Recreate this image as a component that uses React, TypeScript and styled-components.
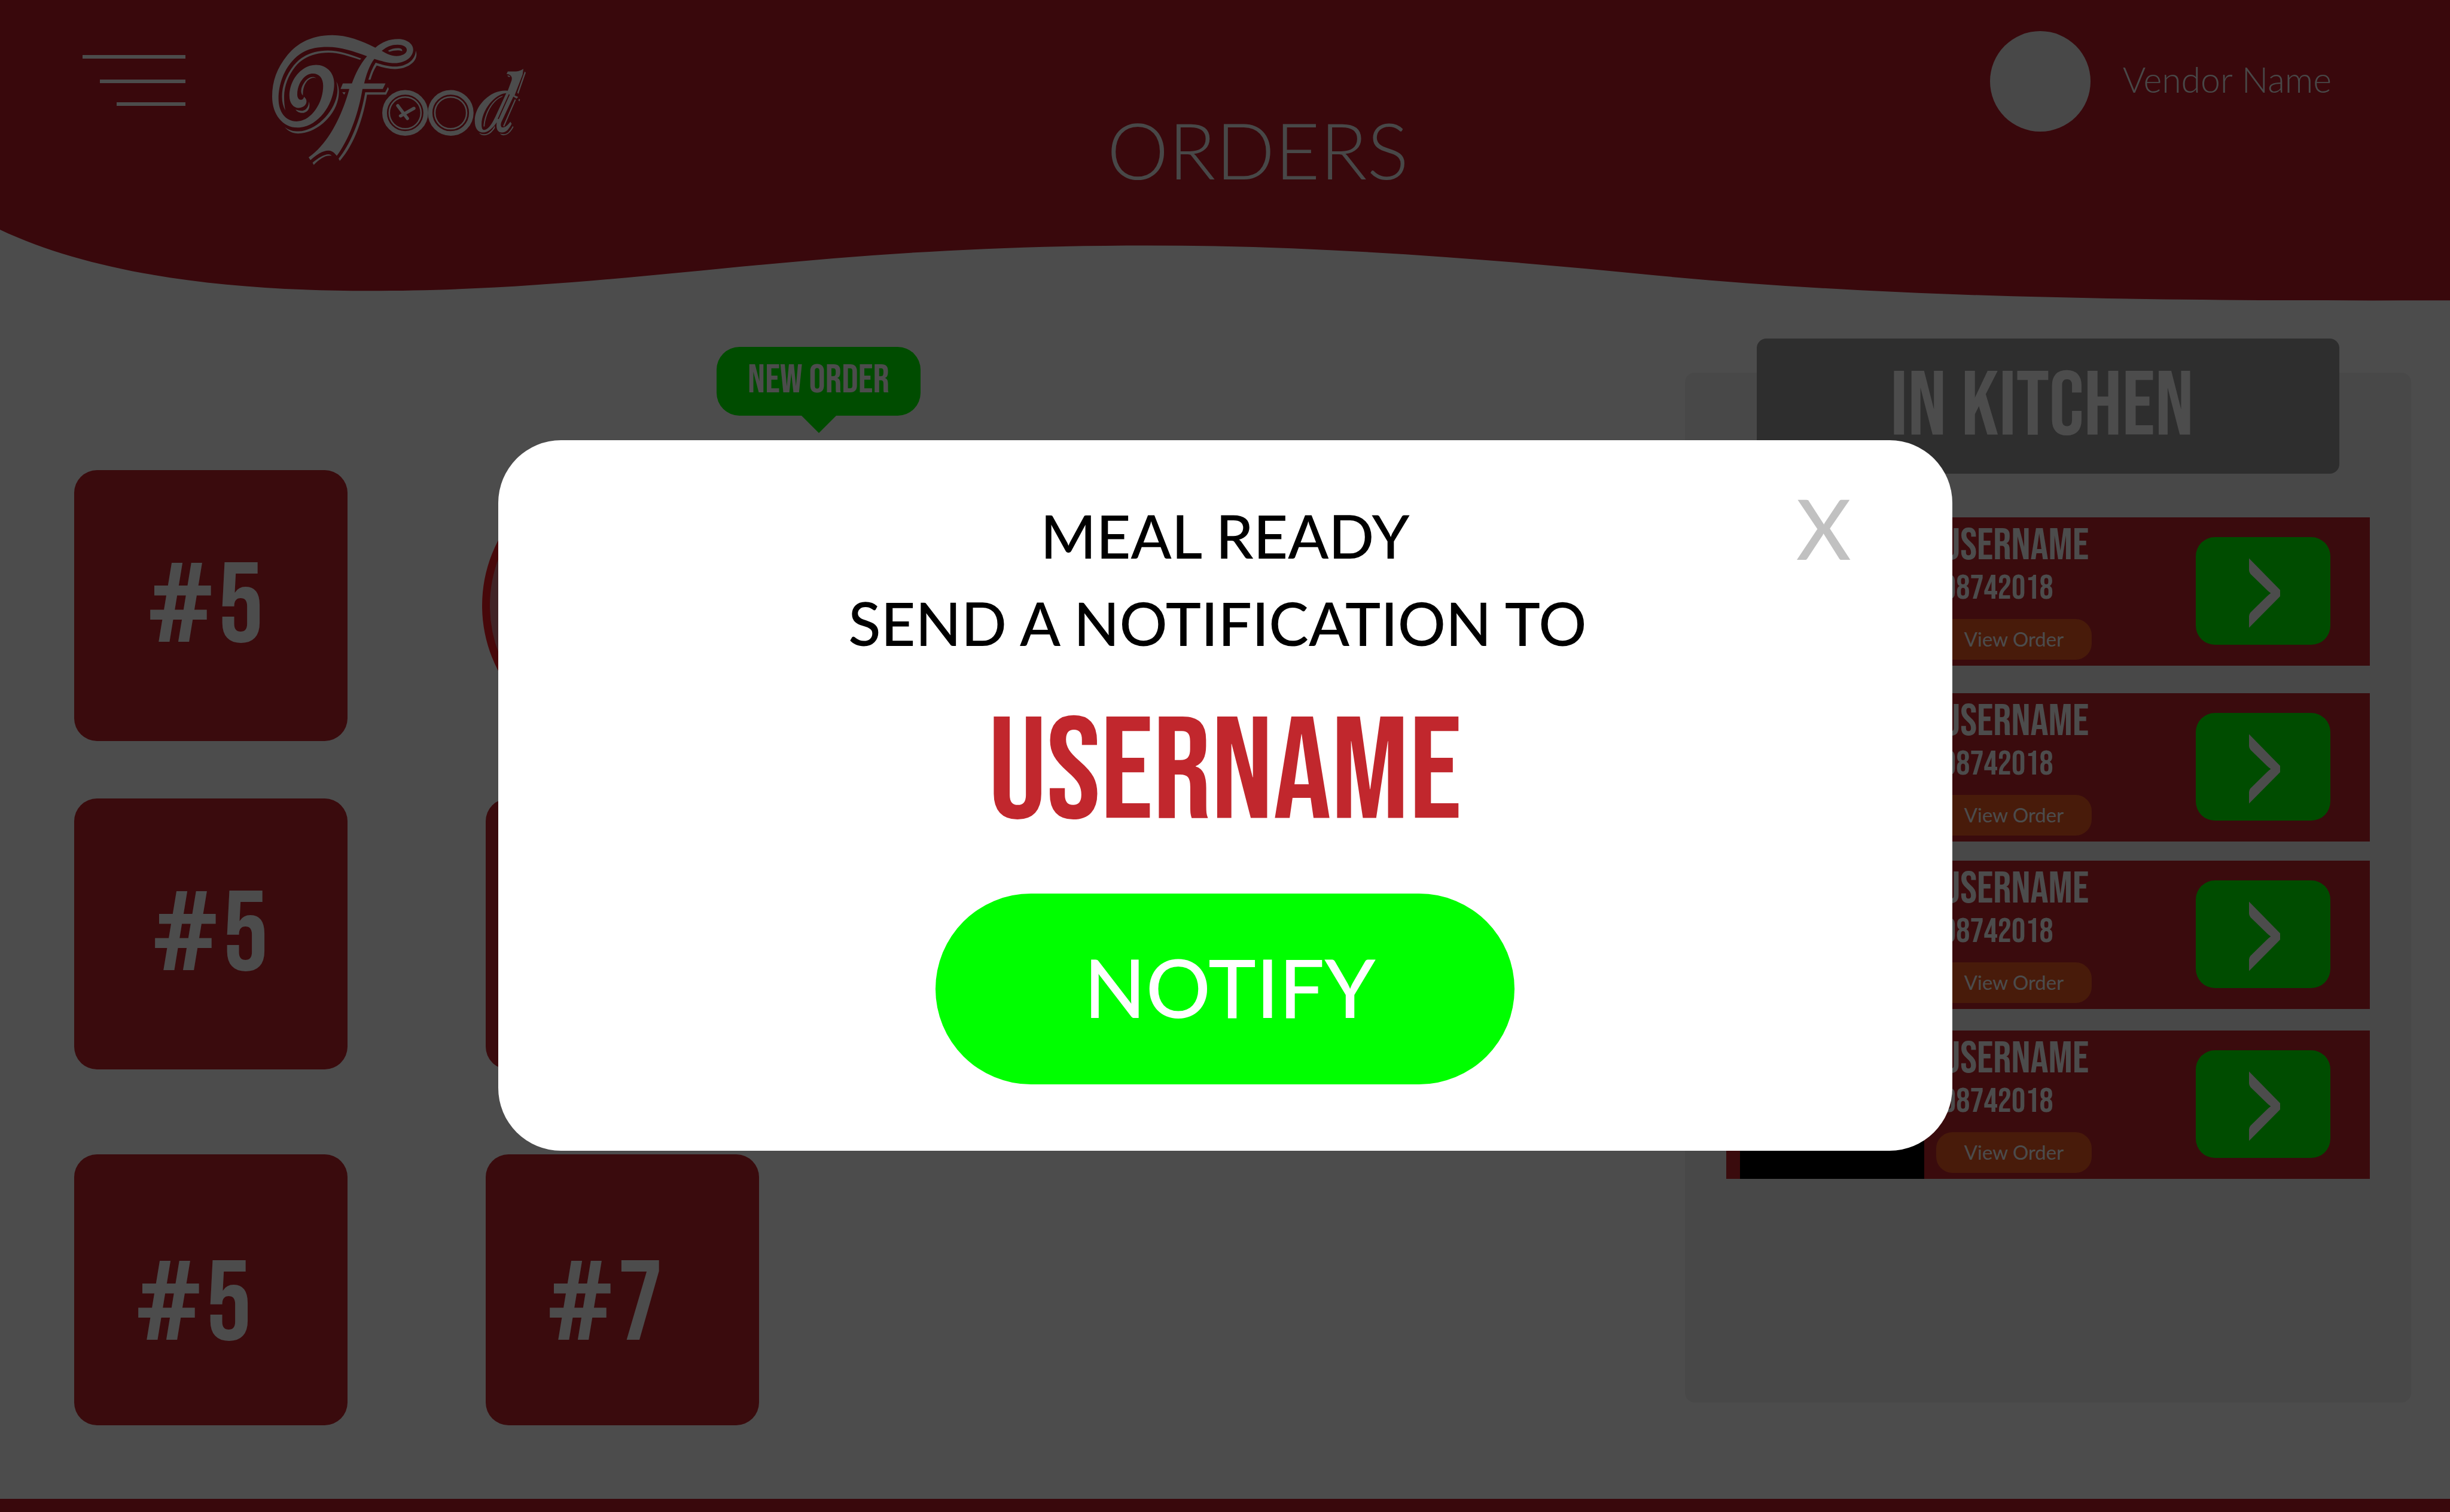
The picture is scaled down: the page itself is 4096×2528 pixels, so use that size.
import React from "react";
import styled, { createGlobalStyle } from "styled-components";

const color = {
  brand: "#be1b28",
  card: "#c1272d",
  green: "#00ff00",
  orange: "#f15a24",
  white: "#ffffff",
  soft: "#f2f2f2",
  gray: "#999999",
};

const display = `"Bebas Neue", "Roboto Condensed", sans-serif`;
const body = `Lato, "Open Sans", sans-serif`;

const GlobalStyle = createGlobalStyle`
  * { box-sizing: border-box; }
  body { margin: 0; background: ${color.white}; font-family: ${body}; }
  button { border: 0; padding: 0; background: none; font: inherit; cursor: pointer; }
  h1, h2, p, ul { margin: 0; padding: 0; font-weight: 400; }
  svg { display: block; }
`;

const Page = styled.div`
  display: flex;
  flex-direction: column;
  min-height: 100vh;
`;

/* ---------- header ---------- */

const Header = styled.header`
  position: relative;
  display: flex;
  justify-content: space-between;
  align-items: flex-start;
  height: 503px;
  padding: 52px 198px 0 138px;
`;

const Wave = styled.svg`
  position: absolute;
  inset: 0;
  z-index: -1;
  width: 100%;
  height: 100%;
`;

const Brand = styled.div`
  display: flex;
  align-items: flex-start;
  gap: 145px;
`;

const MenuButton = styled.button`
  margin-top: 40px;
`;

const LogoLink = styled.a`
  margin-top: 6px;
`;

const PageTitle = styled.h1`
  margin-top: 134px;
  color: ${color.soft};
  font-size: 130px;
  line-height: 128px;
  font-weight: 300;
`;

const Vendor = styled.div`
  display: flex;
  align-items: center;
  gap: 54px;
`;

const Avatar = styled.div`
  width: 168px;
  height: 168px;
  border-radius: 50%;
  background: ${color.soft};
`;

const VendorName = styled.p`
  padding-bottom: 6px;
  color: ${color.soft};
  font-size: 59px;
  line-height: 72px;
  font-weight: 300;
`;

/* ---------- order board ---------- */

const Main = styled.main`
  display: flex;
  flex: 1;
  justify-content: space-between;
  align-items: flex-start;
  padding: 0 65px 0 124px;
`;

const Board = styled.section`
  padding-top: 77px;
`;

const NewOrder = styled.p`
  position: relative;
  width: 341px;
  height: 115px;
  margin: 0 0 91px 1074px;
  border-radius: 38px;
  background: ${color.green};
  color: ${color.white};
  font-family: ${display};
  font-size: 68px;
  line-height: 111px;
  text-align: center;

  &::after {
    content: "";
    position: absolute;
    top: 100%;
    left: 50%;
    margin: -1px 0 0 -30px;
    border: 30px solid transparent;
    border-top-color: ${color.green};
    border-bottom: 0;
  }
`;

const Tiles = styled.div`
  display: grid;
  grid-template-columns: repeat(2, 457px);
  column-gap: 231px;
`;

const tilePadding = {
  top: "0 16px 0 0",
  middle: "0",
  bottom: "46px 56px 0 0",
};

const Tile = styled.button<{ $row: keyof typeof tilePadding }>`
  display: flex;
  justify-content: center;
  align-items: center;
  height: 453px;
  margin-top: ${(p) => (p.$row === "bottom" ? 46 : 0)}px;
  margin-bottom: ${(p) => (p.$row === "bottom" ? 0 : 96)}px;
  padding: ${(p) => tilePadding[p.$row]};
  border-radius: 38px;
  background: ${color.card};
  color: ${color.white};
  font-family: ${display};
  font-size: 190px;
  line-height: 200px;
`;

const TileLabel = styled.span`
  display: flex;
  align-items: baseline;
  gap: 8px;
`;

const Hash = styled.span`
  font-family: Roboto, ${body};
  font-size: 186px;
  font-weight: 900;
`;

const Pulse = styled.div`
  height: 469px;
  margin: -8px -6px;
  border: 13px solid #ed1c24;
  border-radius: 50%;
  background: #db7b83;
`;

/* ---------- kitchen panel ---------- */

const Kitchen = styled.aside`
  display: flex;
  flex-direction: column;
  align-items: center;
  width: 1214px;
  padding-top: 63px;
`;

const KitchenTitle = styled.h2`
  z-index: 1;
  width: 974px;
  padding: 4px 20px 0 0;
  border-radius: 16px;
  background: ${color.gray};
  color: ${color.white};
  font-family: ${display};
  font-size: 152px;
  line-height: 222px;
  text-align: center;
`;

const Queue = styled.ul`
  width: 100%;
  min-height: 1722px;
  && {
    margin-top: -169px;
    padding: 242px 69px 0;
  }
  border-radius: 16px;
  background: ${color.soft};
  list-style: none;
`;

const QueueRow = styled.li<{ $after: number }>`
  display: flex;
  height: 248px;
  margin-bottom: ${(p) => p.$after}px;
  padding: 0 66px 0 23px;
  background: ${color.card};
  color: ${color.white};
`;

const Photo = styled.div`
  width: 308px;
  background: #000000;
`;

const Customer = styled.div`
  display: flex;
  flex-direction: column;
  align-items: flex-start;
  flex: 1;
  padding: 10px 0 0 20px;
  font-family: ${display};
`;

const CustomerName = styled.p`
  && { padding-left: 10px; }
  font-size: 75px;
  line-height: 76px;
`;

const OrderNumber = styled.p`
  && { padding-left: 10px; }
  font-size: 58px;
  line-height: 66px;
`;

const ViewOrder = styled.button`
  width: 260px;
  height: 68px;
  margin-top: 18px;
  padding-bottom: 3px;
  border-radius: 27px;
  background: ${color.orange};
  color: ${color.white};
  font-family: ${body};
  font-size: 33px;
  line-height: 40px;
`;

const ReadyButton = styled.button`
  display: flex;
  justify-content: center;
  align-items: center;
  width: 225px;
  height: 180px;
  margin-top: 33px;
  padding: 6px 0 0 4px;
  border-radius: 32px;
  background: ${color.green};
`;

const Footer = styled.footer`
  height: 22px;
  background: ${color.brand};
`;

/* ---------- dialog ---------- */

const Overlay = styled.div`
  position: fixed;
  inset: 0;
  z-index: 2;
  display: flex;
  justify-content: center;
  align-items: center;
  padding-top: 132px;
  background: rgba(0, 0, 0, 0.7);
`;

const Dialog = styled.section`
  position: relative;
  display: flex;
  flex-direction: column;
  align-items: center;
  width: 2431px;
  max-width: 94%;
  padding: 86px 0 111px;
  border-radius: 105px;
  background: ${color.white};
`;

const Close = styled.button`
  position: absolute;
  top: 69px;
  right: 169px;
  color: #c1c1c1;
  font-size: 140px;
  font-weight: 500;
  line-height: 154px;
`;

const Message = styled.p`
  color: #000000;
  font-size: 100px;
  font-weight: 500;
  line-height: 146px;
  white-space: pre;
`;

const Recipient = styled.h2`
  && { margin-top: 63px; }
  color: ${color.card};
  font-family: ${display};
  font-size: 242px;
  line-height: 238px;
`;

const Notify = styled.button`
  width: 968px;
  height: 319px;
  margin-top: 79px;
  padding: 0 0 8px 16px;
  border-radius: 160px;
  background: ${color.green};
  color: ${color.white};
  font-size: 135px;
  font-weight: 500;
  line-height: 160px;
`;

/* ---------- drawings ---------- */

const MenuIcon = () => (
  <svg width="172" height="85" viewBox="0 0 172 85" fill={color.white} aria-hidden="true">
    <path d="M0 0H172V6H0ZM29 41H172V47H29ZM57 79H172V85H57Z" />
  </svg>
);

const Chevron = () => (
  <svg width="52" height="117" viewBox="0 0 90 201" fill={color.white} aria-hidden="true">
    <path d="M0 0L90 92V110L0 201V168Q0 162 4 157L52 110Q57 105 63 101Q57 97 52 92L4 45Q0 40 0 34Z" />
  </svg>
);

const Logo = () => (
  <svg width="424" height="218" viewBox="28 22 1676 860" fill={color.white} role="img" aria-label="Food">
    {/* large swash, stem and loop */}
    <path
      fillRule="evenodd"
      d="M710 107C620 60 520 24 425 24C300 24 200 70 130 155C60 240 28 330 28 430C28 550 100 635 195 635C330 635 438 480 438 345C438 270 385 221 318 221C220 221 142 320 142 425C142 475 170 505 203 505C232 505 255 485 255 462C255 448 247 438 238 431C237 442 230 451 218 451C203 451 194 436 194 415C194 345 240 278 297 278C340 278 365 310 365 358C365 480 280 594 190 594C115 594 70 530 70 445C70 350 105 250 175 180C235 122 300 102 395 102C480 102 570 132 655 163C610 215 580 275 555 343H495L480 380H538C500 520 430 680 330 780C310 800 290 817 269 831L281 850C320 815 360 787 400 787C425 787 440 803 455 822C545 700 600 530 625 380H759L777 343H636C650 285 670 225 703 181C745 193 790 209 840 209C905 209 960 170 960 120C960 80 915 50 860 50C800 50 755 70 710 107ZM752 128C785 100 815 87 857 87C890 87 918 100 918 122C918 147 885 162 850 162C815 162 785 148 752 128Z"
    />
    {/* engraved shadow lines */}
    <path d="M617 179C540 150 470 126 395 126C300 126 220 160 170 225C120 290 93 360 93 430C93 465 101 495 115 522C109 490 107 460 107 430C108 360 135 290 180 234C230 170 310 140 400 140C470 140 540 165 608 187Z" />
    <path d="M319 308C300 295 275 300 255 320C230 345 217 375 220 400C221 410 226 418 231 423C230 380 240 350 262 325C280 307 300 303 319 308Z" />
    <path d="M182 516C200 520 215 525 228 524C255 520 270 495 271 463C282 500 268 538 225 538C205 538 192 528 182 516Z" />
    <path d="M111 632C140 655 170 660 200 660C340 655 460 500 460 385C460 365 456 345 452 330C464 350 469 375 469 400C469 540 330 674 200 674C165 674 135 660 111 632Z" />
    <path d="M491 402H513L504 417Z" />
    <path d="M712 206C690 240 675 280 664 319H678C688 285 700 252 719 225C760 240 800 248 840 248C920 248 982 205 982 150C982 143 980 135 977 128C974 190 915 232 840 232C795 232 750 218 712 206Z" />
    <path d="M643 402H775L793 367L799 381L781 417H655C625 600 560 760 475 855L467 840C550 740 615 570 643 402Z" />
    <path d="M295 867C330 838 370 812 400 812C410 812 417 817 422 822C380 815 345 840 303 882Z" />
    <path d="M793 128C820 112 850 108 875 112C885 115 889 122 887 130C865 122 835 124 804 134Z" />
    {/* two plates and the cutlery */}
    <g fill="none" stroke={color.white}>
      <circle cx="907" cy="538" r="136" strokeWidth="31" />
      <circle cx="907" cy="538" r="105" strokeWidth="10" />
      <circle cx="1208" cy="538" r="136" strokeWidth="30" />
      <circle cx="1208" cy="538" r="105" strokeWidth="10" />
      <path d="M858 490L922 575M965 508L876 558" strokeWidth="21" strokeLinecap="round" />
    </g>
    {/* closing flourish */}
    <g transform="translate(840 0)">
      <path
        fillRule="evenodd"
        d="M745 264C800 266 825 264 848 246L843 285L790 422L814 432L803 444L782 430L702 600C696 618 700 634 710 634C728 634 745 620 762 596L771 610C752 646 735 667 707 667C678 667 666 645 672 600C645 640 615 667 582 667C548 667 527 640 527 590C527 510 590 435 660 405C690 392 720 388 745 392L770 325C778 300 765 283 737 281ZM735 408C660 412 572 520 572 615C572 640 578 651 590 651C620 648 645 600 662 566Z"
      />
      <path d="M714 424C650 440 590 530 585 628H592C598 550 640 460 706 432Z" />
      <path d="M755 416L682 578" stroke={color.brand} strokeWidth="7" />
      <path d="M795 450L718 627" stroke={color.white} strokeWidth="8" />
      <path d="M857 264L864 272L815 412L808 405Z" />
      <path d="M820 444L826 450L822 462L815 455Z" />
      <path d="M742 293C750 289 758 293 761 300L752 301Z" />
      <path d="M555 670C575 680 600 682 620 668C640 654 652 638 659 622L660 638C640 668 618 686 590 686C575 686 563 680 555 670Z" />
      <path d="M693 674C715 682 735 680 750 665C765 650 772 637 778 625L783 632C768 660 745 686 718 686C708 686 699 681 693 674Z" />
    </g>
  </svg>
);

/* ---------- data ---------- */

type TileData = { id: string; row: keyof typeof tilePadding; table?: number };

const tiles: TileData[] = [
  { id: "a", row: "top", table: 5 },
  { id: "b", row: "top" },
  { id: "c", row: "middle", table: 5 },
  { id: "d", row: "middle", table: 6 },
  { id: "e", row: "bottom", table: 5 },
  { id: "f", row: "bottom", table: 7 },
];

const queue = [
  { id: 1, after: 46 },
  { id: 2, after: 32 },
  { id: 3, after: 36 },
  { id: 4, after: 0 },
];

export default function App() {
  return (
    <Page>
      <GlobalStyle />
      <Header>
        <Wave viewBox="0 0 5400 663" preserveAspectRatio="none" aria-hidden="true">
          <path
            fill={color.brand}
            d="M0 0H5400V662C4700 664 4150 655 3650 607C3280 570 2900 541 2530 541C1750 541 1400 641 812 641C500 641 210 605 0 506Z"
          />
        </Wave>
        <Brand>
          <MenuButton aria-label="Menu">
            <MenuIcon />
          </MenuButton>
          <LogoLink href="#home">
            <Logo />
          </LogoLink>
        </Brand>
        <PageTitle>ORDERS</PageTitle>
        <Vendor>
          <Avatar />
          <VendorName>Vendor Name</VendorName>
        </Vendor>
      </Header>

      <Main>
        <Board>
          <NewOrder>NEW ORDER</NewOrder>
          <Tiles>
            {tiles.map((t) =>
              t.table ? (
                <Tile key={t.id} $row={t.row}>
                  <TileLabel>
                    <Hash>#</Hash>
                    {t.table}
                  </TileLabel>
                </Tile>
              ) : (
                <Pulse key={t.id} />
              )
            )}
          </Tiles>
        </Board>

        <Kitchen>
          <KitchenTitle>IN KITCHEN</KitchenTitle>
          <Queue>
            {queue.map((q) => (
              <QueueRow key={q.id} $after={q.after}>
                <Photo />
                <Customer>
                  <CustomerName>USERNAME</CustomerName>
                  <OrderNumber>98742018</OrderNumber>
                  <ViewOrder>View Order</ViewOrder>
                </Customer>
                <ReadyButton aria-label="Meal ready">
                  <Chevron />
                </ReadyButton>
              </QueueRow>
            ))}
          </Queue>
        </Kitchen>
      </Main>
      <Footer />

      <Overlay>
        <Dialog role="dialog" aria-modal="true" aria-label="Meal ready">
          <Close aria-label="Close">X</Close>
          <Message>MEAL READY</Message>
          <Message>{"SEND A NOTIFICATION TO "}</Message>
          <Recipient>USERNAME</Recipient>
          <Notify>NOTIFY</Notify>
        </Dialog>
      </Overlay>
    </Page>
  );
}
